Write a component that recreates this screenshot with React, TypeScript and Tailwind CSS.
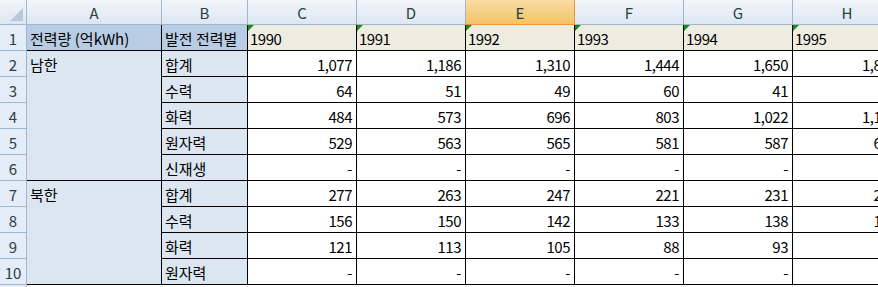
import React from 'react'

const years = ['1990', '1991', '1992', '1993', '1994', '1995']

const rows = [
    { label: '합계', values: ['1,077', '1,186', '1,310', '1,444', '1,650', '1,847'] },
    { label: '수력', values: ['64', '51', '49', '60', '41', '55'] },
    { label: '화력', values: ['484', '573', '696', '803', '1,022', '1,122'] },
    { label: '원자력', values: ['529', '563', '565', '581', '587', '670'] },
    { label: '신재생', values: ['-', '-', '-', '-', '-', '-'] },
    { label: '합계', values: ['277', '263', '247', '221', '231', '230'] },
    { label: '수력', values: ['156', '150', '142', '133', '138', '142'] },
    { label: '화력', values: ['121', '113', '105', '88', '93', '88'] },
    { label: '원자력', values: ['-', '-', '-', '-', '-', '-'] },
]

const cols = ['C', 'D', 'E', 'F', 'G', 'H']

const font = { fontFamily: '"Noto Sans CJK KR", "Noto Sans", sans-serif' }

export default function App() {
    return (
        <div className="w-[878px] h-[287px] overflow-hidden bg-white text-[15px] text-black" style={font}>
            <div className="grid w-[902px] grid-cols-[27px_135px_86px_109px_109px_109px_109px_109px_109px] grid-rows-[25px_repeat(11,26px)]">
                {/* Corner */}
                <div className="relative border-r border-b border-[#9eb6ce] bg-gradient-to-b from-[#f3f6fb] to-[#dde6f1]">
                    <div className="absolute right-[3px] bottom-[3px] w-0 h-0 border-l-[13px] border-l-transparent border-b-[13px] border-b-[#b8c7da]" />
                </div>
                {/* Column headers */}
                {['A', 'B', ...cols].map((c) =>
                    c === 'E' ? (
                        <div key={c} className="flex items-center justify-center border-r border-b border-r-[#f29536] border-b-[#f29536] bg-gradient-to-b from-[#f9dba3] to-[#f2c463] text-[#27413e] leading-none pt-[1px]">
                            {c}
                        </div>
                    ) : (
                        <div key={c} className="flex items-center justify-center border-r border-b border-[#9eb6ce] bg-gradient-to-b from-[#f3f6fb] to-[#dde6f1] text-[#27413e] leading-none pt-[1px]">
                            {c}
                        </div>
                    )
                )}

                {/* Row 1 */}
                <div className="flex items-center justify-center border-r border-b border-[#9eb6ce] bg-[#e4ecf7] text-[#27413e] leading-none pt-[2px]">1</div>
                <div className="flex items-end border-r border-b border-black bg-[#b8cce4] pl-[3px] pb-[1px] leading-[20px] whitespace-nowrap">전력량 (억kWh)</div>
                <div className="flex items-end border-r border-b border-black bg-[#b8cce4] pl-[3px] pb-[1px] leading-[20px] whitespace-nowrap">발전 전력별</div>
                {years.map((y) => (
                    <div key={y} className="relative flex items-end border-r border-b border-black bg-[#eeece1] pl-[2px] pb-[1px] leading-[20px] tracking-[-0.5px]">
                        <div className="absolute left-0 top-0 w-0 h-0 border-t-[6px] border-t-[#1a8a1a] border-r-[6px] border-r-transparent" />
                        {y}
                    </div>
                ))}

                {/* Body rows */}
                {rows.map((r, i) => (
                    <React.Fragment key={i}>
                        <div className="flex items-center justify-center border-r border-b border-[#9eb6ce] bg-[#e4ecf7] text-[#27413e] leading-none pt-[2px]">
                            {i + 2}
                        </div>
                        {i === 0 && (
                            <div className="row-span-5 border-r border-b border-black bg-[#dce6f1] pl-[3px]">
                                <div className="flex h-[25px] items-end pb-[1px] leading-[20px]">남한</div>
                            </div>
                        )}
                        {i === 5 && (
                            <div className="row-span-4 border-r border-b border-black bg-[#dce6f1] pl-[3px]">
                                <div className="flex h-[25px] items-end pb-[1px] leading-[20px]">북한</div>
                            </div>
                        )}
                        <div className="flex items-end border-r border-b border-black bg-[#dce6f1] pl-[3px] pb-[1px] leading-[20px] whitespace-nowrap">
                            {r.label}
                        </div>
                        {r.values.map((v, j) => (
                            <div key={j} className="flex items-end justify-end border-r border-b border-black bg-white pr-[4px] pb-[1px] leading-[20px] tracking-[-0.5px]">
                                {v}
                            </div>
                        ))}
                    </React.Fragment>
                ))}

                {/* Row 11 */}
                <div className="flex items-center justify-center border-r border-[#9eb6ce] bg-[#e4ecf7] text-[#27413e] leading-none pt-[2px]">11</div>
                {['A', 'B', ...cols].map((c) => (
                    <div key={c} className="border-r border-[#d0d7e5] bg-white" />
                ))}
            </div>
        </div>
    )
}
